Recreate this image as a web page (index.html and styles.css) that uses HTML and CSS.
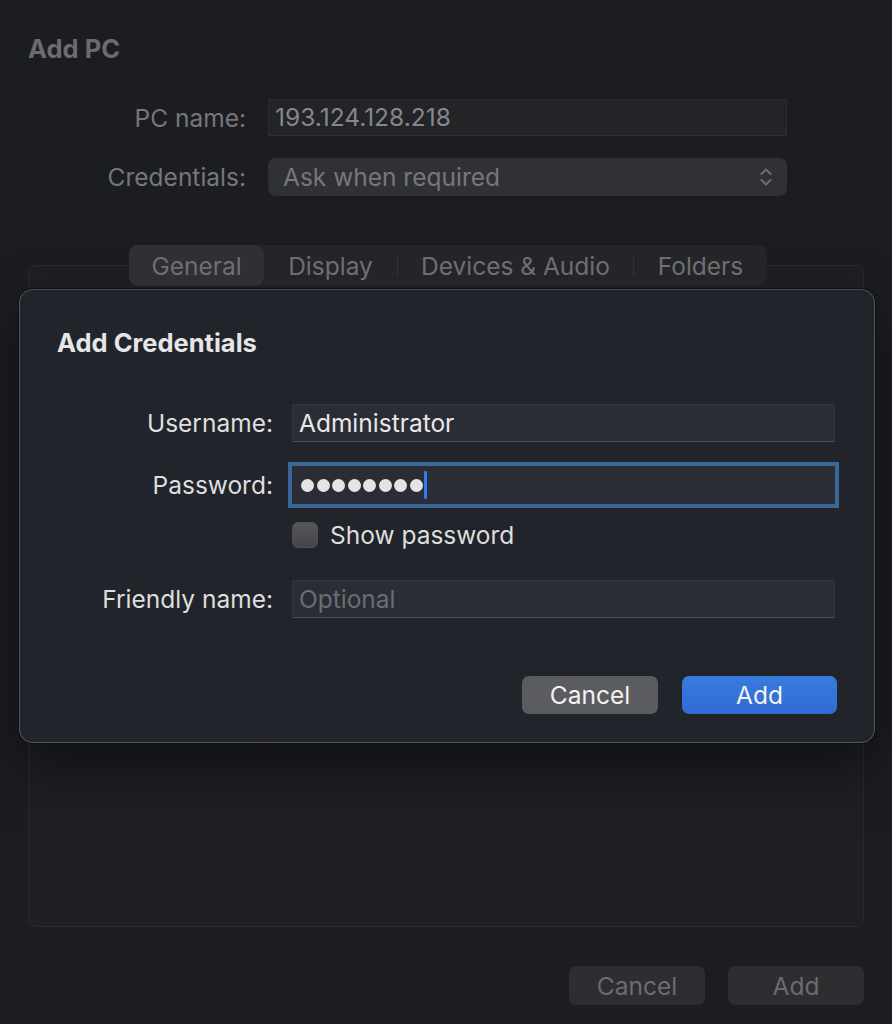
FILE: index.html
```html
<!DOCTYPE html>
<html lang="en">
<head>
  <meta charset="UTF-8" />
  <meta name="viewport" content="width=device-width, initial-scale=1.0" />
  <title>Add PC</title>
  <link rel="stylesheet" href="styles.css">
</head>
<body>
  <div class="window">
    <h1 class="title">Add PC</h1>

    <div class="form">
      <label class="label">PC name:</label>
      <div class="field">193.124.128.218</div>
      <label class="label">Credentials:</label>
      <div class="popup">
        <span>Ask when required</span>
        <svg class="chevrons" width="14" height="22" viewBox="0 0 14 22">
          <path d="M2.5 8 L7 3.5 L11.5 8" />
          <path d="M2.5 14 L7 18.5 L11.5 14" />
        </svg>
      </div>
    </div>

    <div class="tabs-wrap">
      <div class="tabs">
        <div class="tab selected">General</div>
        <div class="tab t-display">Display</div>
        <div class="tab t-devices">Devices &amp; Audio</div>
        <div class="tab t-folders">Folders</div>
      </div>
    </div>
    <div class="panel">
      <div class="ghost-row">
        <span class="ghost-box"></span>
        <span class="ghost-text"></span>
      </div>
    </div>

    <div class="footer">
      <button class="btn dim">Cancel</button>
      <button class="btn dim">Add</button>
    </div>
  </div>

  <!-- sheet over the window -->
  <div class="sheet">
    <h2 class="sheet-title">Add Credentials</h2>

    <div class="srow user">
      <label class="slabel">Username:</label>
      <div class="sfield">Administrator</div>
    </div>
    <div class="srow pass">
      <label class="slabel">Password:</label>
      <div class="sfield focused">
        <span class="dot"></span><span class="dot"></span><span class="dot"></span><span class="dot"></span>
        <span class="dot"></span><span class="dot"></span><span class="dot"></span><span class="dot"></span>
        <span class="caret"></span>
      </div>
    </div>
    <div class="srow check">
      <div></div>
      <div class="check-row">
        <span class="checkbox"></span>
        <span>Show password</span>
      </div>
    </div>
    <div class="srow friendly">
      <label class="slabel">Friendly name:</label>
      <div class="sfield placeholder">Optional</div>
    </div>

    <div class="sheet-buttons">
      <button class="sbtn cancel">Cancel</button>
      <button class="sbtn add">Add</button>
    </div>
  </div>
</body>
</html>
```

FILE: styles.css
```css
body {
  margin: 0;
  background: #1c1d21;
  font-family: Inter, Roboto, "Liberation Sans", sans-serif;
  font-size: 24.5px;
  height: 1024px;
  overflow: hidden;
  position: relative;
}

.window {
  padding: 0 28px;
}

.title {
  margin: 0;
  padding-top: 34px;
  font-size: 25.5px;
  font-weight: 700;
  color: #6c6c6f;
  line-height: 30px;
}

.form {
  display: grid;
  grid-template-columns: 218px 519px;
  column-gap: 22px;
  row-gap: 22px;
  margin-top: 35px;
  align-items: center;
}
.label {
  text-align: right;
  color: #77777a;
}
.field {
  height: 37px;
  box-sizing: border-box;
  background: #232428;
  border: 1px solid #2a2b2f;
  border-bottom-color: #303136;
  color: #87878a;
  padding-left: 6px;
  line-height: 35px;
}
.popup {
  height: 38px;
  box-sizing: border-box;
  background: #303135;
  border-radius: 8px;
  color: #77777a;
  padding: 0 14px 0 15px;
  display: flex;
  align-items: center;
  justify-content: space-between;
}
.chevrons path {
  fill: none;
  stroke: #6e6e72;
  stroke-width: 2;
  stroke-linecap: round;
  stroke-linejoin: round;
}

.tabs-wrap {
  margin-top: 49px;
  margin-bottom: -21px;
  padding-left: 101px;
  position: relative;
  z-index: 1;
}
.tabs {
  display: flex;
  align-items: center;
  height: 41px;
  width: 638px;
  background: #242529;
  border-radius: 9px;
  color: #6f6f72;
}
.tab {
  height: 100%;
  display: flex;
  align-items: center;
  justify-content: center;
  box-sizing: border-box;
}
.tab.selected {
  background: #2f3034;
  border-radius: 9px;
  width: 135px;
}
.t-display { width: 133px; }
.t-devices {
  width: 237px;
  height: 20px;
  border-left: 1px solid #333438;
  border-right: 1px solid #333438;
}
.t-folders { width: 133px; }
.panel {
  height: 660px;
  border: 1px solid #2a2b2f;
  border-radius: 8px;
  background: #1f2024;
  position: relative;
}
.ghost-row {
  position: absolute;
  left: 240px;
  top: 462px;
  display: flex;
  gap: 40px;
  align-items: center;
}
.ghost-box {
  width: 22px;
  height: 20px;
  border-radius: 4px;
  background: #232428;
}
.ghost-text {
  width: 2px;
  height: 8px;
  background: #3a3b3f;
}

.footer {
  display: flex;
  justify-content: flex-end;
  gap: 23px;
  margin-top: 39px;
}
.btn {
  width: 136px;
  height: 39px;
  border: none;
  border-radius: 7px;
  font-family: inherit;
  font-size: 24.5px;
}
.btn.dim {
  background: #2d2e32;
  color: #6c6c6f;
}

/* credentials sheet */
.sheet {
  position: absolute;
  left: 19px;
  top: 289px;
  width: 856px;
  height: 454px;
  box-sizing: border-box;
  background: #21242b;
  border: 1px solid #55575c;
  border-top-color: #4a4c51;
  border-radius: 14px;
  box-shadow: 0 0 0 1px #0e0f12, 0 26px 60px rgba(0, 0, 0, 0.5);
  padding: 0 39px 0 37px;
  color: #dedede;
}
.sheet-title {
  margin: 0;
  padding-top: 38px;
  font-size: 25.5px;
  font-weight: 700;
  line-height: 30px;
  color: #e6e6e6;
}
.srow {
  display: grid;
  grid-template-columns: 216px 543px;
  column-gap: 19px;
  align-items: center;
}
.srow.user { margin-top: 46px; }
.srow.pass { margin-top: 24px; }
.srow.check { margin-top: 17px; }
.srow.friendly { margin-top: 32px; }
.slabel {
  text-align: right;
}
.sfield {
  height: 38px;
  box-sizing: border-box;
  background: #2a2d35;
  border: 1px solid #33363d;
  border-bottom-color: #4a4c52;
  padding-left: 6px;
  color: #e8e8e8;
  display: flex;
  align-items: center;
}
.sfield.focused {
  outline: 4px solid #3b6797;
  outline-offset: 0;
  border-color: #2a2d35;
  padding-left: 8px;
  gap: 2.5px;
}
.dot {
  width: 13px;
  height: 13px;
  border-radius: 50%;
  background: #e4e4e4;
}
.caret {
  width: 3px;
  height: 28px;
  background: #3478f6;
  border-radius: 1px;
  margin-left: -1px;
}
.check-row {
  display: flex;
  align-items: center;
  gap: 12px;
  height: 27px;
}
.checkbox {
  width: 26px;
  height: 26px;
  box-sizing: border-box;
  border-radius: 6px;
  background: linear-gradient(#57575b, #454549);
  border: 1px solid #505054;
}
.sfield.placeholder {
  color: #6b6d73;
}
.sheet-buttons {
  display: flex;
  justify-content: flex-end;
  gap: 24px;
  margin-top: 58px;
  margin-right: -2px;
}
.sbtn {
  height: 38px;
  border: none;
  border-radius: 7px;
  font-family: inherit;
  font-size: 24.5px;
  color: #f2f2f2;
}
.sbtn.cancel {
  width: 136px;
  background: #5b5c60;
}
.sbtn.add {
  width: 155px;
  background: linear-gradient(#3a7be0, #2f6bd2);
}
```
